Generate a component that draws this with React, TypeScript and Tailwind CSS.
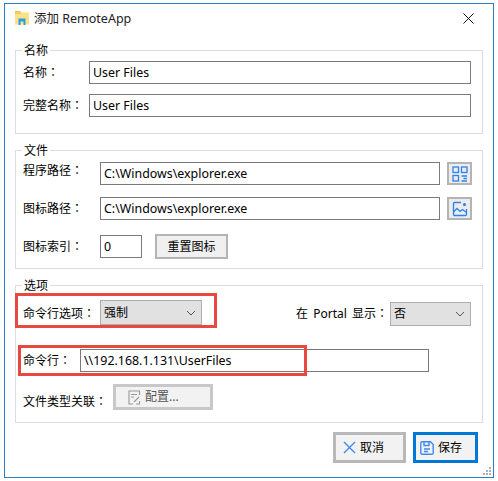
const font = { fontFamily: '"Noto Sans", "Noto Sans CJK SC", sans-serif' };

function Label({ text, className = '' }: { text: string; className?: string }) {
  return (
    <span className={`shrink-0 ${className}`}>
      {text}
      <span className="[font-family:'Noto_Sans_CJK_TC']">：</span>
    </span>
  );
}

function TextBox({ value, className }: { value: string; className: string }) {
  return (
    <input
      readOnly
      value={value}
      className={`h-[23px] shrink-0 border border-[#7a7a7a] bg-white pb-[1px] pl-[3px] text-[12.4px] leading-none text-black outline-none ${className}`}
    />
  );
}

function Group({ title, className, children }: { title: string; className: string; children: React.ReactNode }) {
  return (
    <div className={`relative border border-[#dcdcdc] ${className}`}>
      <span className="absolute -top-[9px] left-[6px] bg-white px-[2px] text-[12px] leading-[18px] text-black">{title}</span>
      {children}
    </div>
  );
}

function Dropdown({ value, className }: { value: string; className: string }) {
  return (
    <div className={`flex shrink-0 items-center justify-between border border-[#adadad] bg-[#e1e1e1] pl-[3px] pr-[5px] text-[12px] text-black ${className}`}>
      <span>{value}</span>
      <svg width="10" height="6" viewBox="0 0 10 6" fill="none" stroke="#555" strokeWidth="1">
        <path d="M1 1l4 4 4-4" />
      </svg>
    </div>
  );
}

function FolderIcon() {
  return (
    <svg width="16" height="16" viewBox="0 0 16 16" className="shrink-0">
      <path d="M1 1h5l1 1.5h-6z" fill="#e8b93e" />
      <rect x="1" y="2.5" width="14" height="12" fill="#fce08a" />
      <rect x="1" y="2.5" width="6" height="1.5" fill="#f2c94e" />
      <path d="M4.5 15V8.5h7V15h-2v-3.5h-3V15z" fill="#2c9fe0" />
    </svg>
  );
}

function GridIcon() {
  return (
    <svg width="16" height="16" viewBox="0 0 16 16" fill="none" stroke="#2c82f0" strokeWidth="1.3">
      <rect x="1" y="1" width="5.5" height="5.5" />
      <rect x="9.5" y="1" width="5.5" height="5.5" />
      <rect x="1" y="9.5" width="5.5" height="5.5" />
      <path d="M9.5 10h5.5M11.5 12.5H15M9.5 15h5.5" />
    </svg>
  );
}

function PictureIcon() {
  return (
    <svg width="16" height="16" viewBox="0 0 16 16" fill="none" stroke="#2c82f0" strokeWidth="1.3">
      <path d="M9 1.5H2.5a1 1 0 0 0-1 1v11a1 1 0 0 0 1 1h11a1 1 0 0 0 1-1V8" />
      <path d="M1.5 11l3.5-3.5 3 3 2.5-2 4 3" />
      <circle cx="12.5" cy="3.5" r="1.6" fill="#2c82f0" stroke="none" />
    </svg>
  );
}

function SaveIcon() {
  return (
    <svg width="14" height="14" viewBox="0 0 14 14" fill="none" stroke="#3d8bf0" strokeWidth="1.4" className="shrink-0">
      <path d="M2 .8h8.5l2.7 2.7V12a1.2 1.2 0 0 1-1.2 1.2H2A1.2 1.2 0 0 1 .8 12V2A1.2 1.2 0 0 1 2 .8z" />
      <path d="M4 1v3.5h5V1M4 8h6M4 10.5h4" />
    </svg>
  );
}

function ConfigIcon() {
  return (
    <svg width="13" height="15" viewBox="0 0 13 15" fill="none" stroke="#9a9a9a" strokeWidth="1.1" className="shrink-0">
      <path d="M11.5 5V1H1v13h4M8 14h3.5v-3" />
      <path d="M3 4.5h6M3 7h3M6 12l5-5" />
    </svg>
  );
}

export default function App() {
  return (
    <div style={font} className="h-[481px] w-[498px] overflow-hidden bg-white pl-[4px] pt-[3px]">
      <div className="relative flex h-[475px] w-[490px] flex-col border border-[#2a7fc4] bg-white pl-[10px] pr-[10px]">
        {/* title bar */}
        <div className="-ml-[1px] flex h-[46px] shrink-0 items-start pt-[6px] pr-[9px]">
          <FolderIcon />
          <span className="ml-[4px] text-[12.5px] leading-[18px] text-[#222]">添加 RemoteApp</span>
          <svg width="11" height="11" viewBox="0 0 11 11" stroke="#111" strokeWidth="1" className="ml-auto mt-[3px]">
            <path d="M.5.5l10 10M10.5.5l-10 10" />
          </svg>
        </div>

        <Group title="名称" className="h-[84px] shrink-0">
          <div className="flex flex-col gap-[10px] pl-[7px] pr-[11px] pt-[10px] text-[12px] text-black">
            <div className="flex items-center justify-between">
              <Label text="名称" />
              <TextBox value="User Files" className="w-[382px]" />
            </div>
            <div className="flex items-center justify-between">
              <Label text="完整名称" />
              <TextBox value="User Files" className="w-[382px]" />
            </div>
          </div>
        </Group>

        <Group title="文件" className="mt-[16px] h-[119px] shrink-0">
          <div className="flex flex-col pl-[7px] pr-[10px] pt-[11px] text-[12px] text-black">
            <div className="flex items-center">
              <Label text="程序路径" className="-mt-[7px] w-[77px]" />
              <TextBox value="C:\Windows\explorer.exe" className="w-[340px]" />
              <button className="ml-[7px] flex h-[23px] w-[25px] items-center justify-center border-2 border-[#b4b4b4] bg-[#ececec]">
                <GridIcon />
              </button>
            </div>
            <div className="mt-[12px] flex items-center">
              <Label text="图标路径" className="w-[77px]" />
              <TextBox value="C:\Windows\explorer.exe" className="w-[340px]" />
              <button className="ml-[7px] flex h-[23px] w-[25px] items-center justify-center border-2 border-[#b4b4b4] bg-[#ececec]">
                <PictureIcon />
              </button>
            </div>
            <div className="mt-[14px] flex items-center">
              <Label text="图标索引" className="w-[77px]" />
              <TextBox value="0" className="w-[42px]" />
              <button className="ml-[13px] h-[25px] w-[73px] border-2 border-[#b4b4b4] bg-[#f0f0f0] text-[12px] text-black">重置图标</button>
            </div>
          </div>
        </Group>

        <Group title="选项" className="mt-[16px] h-[138px] shrink-0">
          <div className="flex flex-col pl-[7px] pr-[11px] pt-[14px] text-[12px] text-black">
            <div className="flex items-start">
              <Label text="命令行选项" className="mt-[4px] w-[77px]" />
              <Dropdown value="强制" className="h-[25px] w-[102px]" />
              <Label text="在 Portal 显示" className="ml-auto mr-[2px] mt-[4px] [word-spacing:2px]" />
              <Dropdown value="否" className="mt-[2px] h-[24px] w-[81px]" />
            </div>
            <div className="mt-[23px] flex items-center">
              <Label text="命令行" className="w-[57px]" />
              <TextBox value="\\192.168.1.131\UserFiles" className="w-[349px]" />
            </div>
            <div className="mt-[12px] flex items-start">
              <Label text="文件类型关联" className="mt-[8px] w-[90px]" />
              <button className="flex h-[26px] w-[100px] items-center gap-[4px] border-[3px] border-[#c8c8c8] bg-[#f2f2f2] pl-[12px] text-[12px] text-[#555]">
                <ConfigIcon />
                配置...
              </button>
            </div>
          </div>
          {/* red annotation boxes */}
          <div className="absolute left-[-1px] top-[7px] h-[35px] w-[202px] border-[3px] border-[#e8483f]" />
          <div className="absolute left-[2px] top-[59px] h-[31px] w-[289px] border-[3px] border-[#e8483f]" />
        </Group>

        <div className="mt-[9px] flex justify-end gap-[7px] pr-[5px]">
          <button className="flex h-[31px] w-[73px] items-center gap-[4px] border-[3px] border-[#b8b8b8] bg-[#f2f2f2] pl-[7px] text-[12px] text-black">
            <svg width="13" height="13" viewBox="0 0 13 13" stroke="#3d8bf0" strokeWidth="1.4" className="shrink-0">
              <path d="M1 1l11 11M12 1L1 12" />
            </svg>
            取消
          </button>
          <button className="flex h-[31px] w-[65px] items-center gap-[4px] border-[3px] border-[#0078d7] bg-[#f2f2f2] pl-[4px] text-[12px] text-black">
            <SaveIcon />
            保存
          </button>
        </div>

        {/* resize grip */}
        <svg width="9" height="9" viewBox="0 0 9 9" fill="#b0b0b0" className="absolute bottom-[1px] right-[1px]">
          <rect x="6" y="0" width="2" height="2" />
          <rect x="3" y="3" width="2" height="2" />
          <rect x="6" y="3" width="2" height="2" />
          <rect x="0" y="6" width="2" height="2" />
          <rect x="3" y="6" width="2" height="2" />
          <rect x="6" y="6" width="2" height="2" />
        </svg>
      </div>
    </div>
  );
}
